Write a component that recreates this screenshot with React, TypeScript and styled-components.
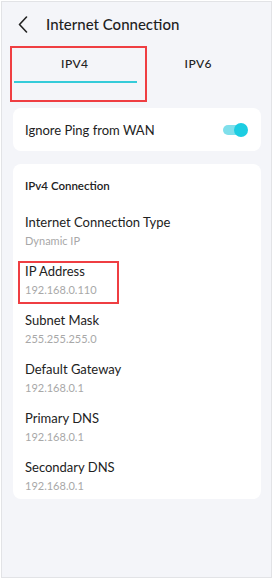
import React from "react";
import styled, { createGlobalStyle } from "styled-components";

const Global = createGlobalStyle`
  html, body { margin: 0; padding: 0; background: #ffffff; }
  body { font-family: "Lato", "Noto Sans", sans-serif; }
`;

const Frame = styled.div`
  box-sizing: border-box;
  margin: 1px 0 0 1px;
  width: 271px;
  height: 577px;
  border: 1px solid #e2e3e6;
  background: #f4f5f9;
  display: flex;
  flex-direction: column;
  overflow: hidden;
`;

const Header = styled.div`
  height: 44px;
  display: flex;
  align-items: center;
  padding-left: 14px;
  gap: 16px;
`;

const BackButton = styled.div`
  width: 14px;
  height: 18px;
  display: flex;
  align-items: center;
  justify-content: center;
`;

const Title = styled.div`
  font-size: 15px;
  color: #1f1f1f;
  font-weight: 500;
`;

const Tabs = styled.div`
  display: flex;
  padding: 0 11px;
  height: 56px;
`;

const Tab = styled.div<{ $active?: boolean }>`
  position: relative;
  flex: 1;
  display: flex;
  flex-direction: column;
  align-items: center;
  padding-top: 10px;
  font-size: 12px;
  color: #222;
  font-weight: 500;
  letter-spacing: 0.4px;
`;

const Underline = styled.div`
  position: absolute;
  left: 1px;
  right: 0;
  top: 35px;
  height: 2px;
  background: #35cbd9;
`;

const Annotation = styled.div<{ $l: number; $t: number; $w: number; $h: number }>`
  position: absolute;
  left: ${(p) => p.$l}px;
  top: ${(p) => p.$t}px;
  width: ${(p) => p.$w}px;
  height: ${(p) => p.$h}px;
  box-sizing: border-box;
  border: 2px solid #ef3e42;
  pointer-events: none;
`;

const Card = styled.div`
  margin: 6px 10px 0 11px;
  background: #ffffff;
  border-radius: 8px;
`;

const ToggleRow = styled.div`
  height: 43px;
  display: flex;
  align-items: center;
  justify-content: space-between;
  padding: 0 13px 0 12px;
  font-size: 13px;
  color: #222;
`;

const Switch = styled.div`
  position: relative;
  width: 25px;
  height: 14px;
`;

const SwitchTrack = styled.div`
  position: absolute;
  left: 0;
  top: 2px;
  width: 24px;
  height: 10px;
  border-radius: 5px;
  background: #7fdfeb;
`;

const SwitchKnob = styled.div`
  position: absolute;
  right: 0;
  top: 0;
  width: 14px;
  height: 14px;
  border-radius: 50%;
  background: #1ccde2;
`;

const InfoCard = styled(Card)`
  margin-top: 13px;
  padding: 15px 12px 0;
  position: relative;
`;

const SectionTitle = styled.div`
  font-size: 11.5px;
  color: #222;
  font-weight: 600;
  margin-bottom: 22px;
`;

const ItemList = styled.div`
  display: flex;
  flex-direction: column;
`;

const Item = styled.div`
  height: 49px;
  display: flex;
  flex-direction: column;
  &:last-child {
    height: 40px;
  }
`;

const Label = styled.div`
  font-size: 13px;
  color: #222;
  line-height: 17px;
`;

const Value = styled.div`
  font-size: 11px;
  color: #a8a8a8;
  line-height: 14px;
  margin-top: 3px;
`;

const items = [
  ["Internet Connection Type", "Dynamic IP"],
  ["IP Address", "192.168.0.110"],
  ["Subnet Mask", "255.255.255.0"],
  ["Default Gateway", "192.168.0.1"],
  ["Primary DNS", "192.168.0.1"],
  ["Secondary DNS", "192.168.0.1"],
];

export default function App() {
  return (
    <>
      <Global />
      <Frame>
        <Header>
          <BackButton>
            <svg width="10" height="17" viewBox="0 0 10 17">
              <path d="M8.5 1 L1.5 8.5 L8.5 16" fill="none" stroke="#222" strokeWidth="1.6" strokeLinecap="round" strokeLinejoin="round" />
            </svg>
          </BackButton>
          <Title>Internet Connection</Title>
        </Header>
        <Tabs>
          <Tab $active>
            IPV4
            <Underline />
            <Annotation $l={-3} $t={0} $w={137} $h={56} />
          </Tab>
          <Tab>IPV6</Tab>
        </Tabs>
        <Card>
          <ToggleRow>
            <span>Ignore Ping from WAN</span>
            <Switch>
              <SwitchTrack />
              <SwitchKnob />
            </Switch>
          </ToggleRow>
        </Card>
        <InfoCard>
          <SectionTitle>IPv4 Connection</SectionTitle>
          <ItemList>
            {items.map(([l, v]) => (
              <Item key={l}>
                <Label>{l}</Label>
                <Value>{v}</Value>
              </Item>
            ))}
          </ItemList>
          <Annotation $l={5} $t={97} $w={101} $h={43} />
        </InfoCard>
      </Frame>
    </>
  );
}
